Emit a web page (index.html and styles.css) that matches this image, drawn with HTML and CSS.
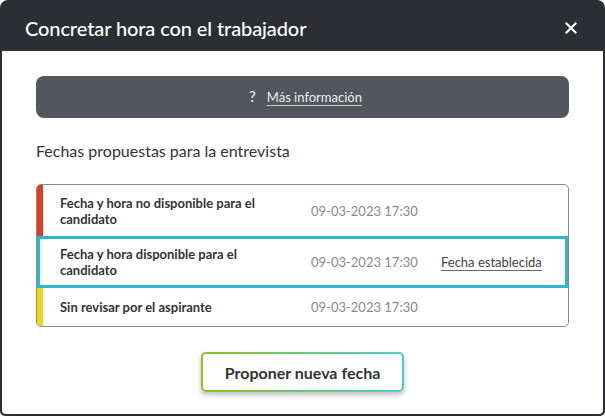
FILE: index.html
```html
<!DOCTYPE html>
<html lang="es">
<head>
<meta charset="utf-8">
<link rel="stylesheet" href="styles.css">
</head>
<body>
<div class="modal">
  <div class="modal-header">
    <h1 class="modal-title">Concretar hora con el trabajador</h1>
    <span class="close">
      <svg width="12" height="12" viewBox="0 0 12 12"><path d="M1.5 1.5 L10.5 10.5 M10.5 1.5 L1.5 10.5" stroke="#fff" stroke-width="2.2" stroke-linecap="square"/></svg>
    </span>
  </div>
  <div class="modal-body">
    <div class="info-bar">
      <span class="info-q">?</span>
      <span class="info-link">Más información</span>
    </div>
    <p class="section-title">Fechas propuestas para la entrevista</p>
    <div class="dates">
      <div class="row row-red">
        <div class="stripe"></div>
        <div class="row-label">Fecha y hora no disponible para el candidato</div>
        <div class="row-date">09-03-2023 17:30</div>
        <div class="row-action"></div>
      </div>
      <div class="row row-selected">
        <div class="stripe"></div>
        <div class="row-label">Fecha y hora disponible para el candidato</div>
        <div class="row-date">09-03-2023 17:30</div>
        <div class="row-action"><span class="action-link">Fecha establecida</span></div>
      </div>
      <div class="row row-yellow">
        <div class="stripe"></div>
        <div class="row-label">Sin revisar por el aspirante</div>
        <div class="row-date">09-03-2023 17:30</div>
        <div class="row-action"></div>
      </div>
    </div>
    <div class="actions">
      <button class="btn-primary">Proponer nueva fecha</button>
    </div>
  </div>
</div>
</body>
</html>
```
FILE: styles.css
```css
* { box-sizing: border-box; }
html, body { margin: 0; padding: 0; background: #fff; }
body { font-family: Lato, "Open Sans", sans-serif; }

.modal {
  width: 605px;
  height: 416px;
  background: #2b2e33;
  border-radius: 8px 8px 5px 5px;
  display: flex;
  flex-direction: column;
  overflow: hidden;
}

.modal-header {
  height: 51px;
  flex: none;
  display: flex;
  align-items: center;
  justify-content: space-between;
  padding: 0 28px 0 25px;
}
.modal-title {
  margin: 0;
  color: #fff;
  font-size: 20px;
  font-weight: 500;
  letter-spacing: -0.1px;
  padding-top: 4px;
}
.close { display: flex; padding-top: 4px; }

.modal-body {
  flex: 1;
  margin: 0 2px 2px;
  background: #fff;
  border-radius: 0 0 4px 4px;
  padding: 25px 34px 0 34px;
}

.info-bar {
  height: 42px;
  background: #53575d;
  border-radius: 8px;
  display: flex;
  align-items: center;
  justify-content: center;
  gap: 11px;
  color: #ececec;
  font-size: 13px;
  padding-left: 6px;
}
.info-q { font-size: 15px; font-weight: 500; padding-bottom: 2px; }
.info-link {
  text-decoration: underline;
  text-underline-offset: 3px;
  text-decoration-color: #c9c9c9;
}

.section-title {
  margin: 23px 0 23px;
  font-size: 16px;
  color: #333;
  line-height: 20px;
}

.dates {
  border: 1px solid #8a8a8a;
  border-radius: 5px;
  overflow: hidden;
}
.row {
  display: flex;
  align-items: stretch;
  position: relative;
  font-size: 13px;
}
.stripe { width: 6px; flex: none; }
.row-red { height: 51px; }
.row-red .stripe { background: #e0391f; }
.row-selected { height: 52px; }
.row-selected .stripe { background: #f3f3f5; }
.row-selected::after {
  content: "";
  position: absolute;
  inset: 0;
  border: 3px solid #2db7cc;
  pointer-events: none;
}
.row-yellow { height: 38px; }
.row-yellow .stripe { background: #f2d51b; }

.row-label {
  width: 250px;
  flex: none;
  padding: 0 20px 0 17px;
  display: flex;
  align-items: center;
  font-weight: 700;
  color: #333;
  line-height: 16px;
}
.row-date {
  width: 130px;
  flex: none;
  display: flex;
  align-items: center;
  color: #8a8a8a;
  padding-left: 18px;
  white-space: nowrap;
}
.row-action {
  flex: 1;
  display: flex;
  align-items: center;
  padding-left: 18px;
  color: #444;
  white-space: nowrap;
}
.action-link {
  text-decoration: underline;
  text-underline-offset: 3px;
  text-decoration-color: #666;
}

.actions {
  display: flex;
  justify-content: center;
  margin-top: 25px;
}
.btn-primary {
  width: 203px;
  height: 40px;
  border: 2px solid transparent;
  border-radius: 5px;
  background:
    linear-gradient(#fff, #fff) padding-box,
    linear-gradient(90deg, #8dc21f, #4ccfca) border-box;
  box-shadow: 0 3px 5px rgba(0,0,0,0.25);
  font-family: Lato, "Open Sans", sans-serif;
  font-weight: 700;
  font-size: 16px;
  color: #333;
  padding: 0;
}
```
